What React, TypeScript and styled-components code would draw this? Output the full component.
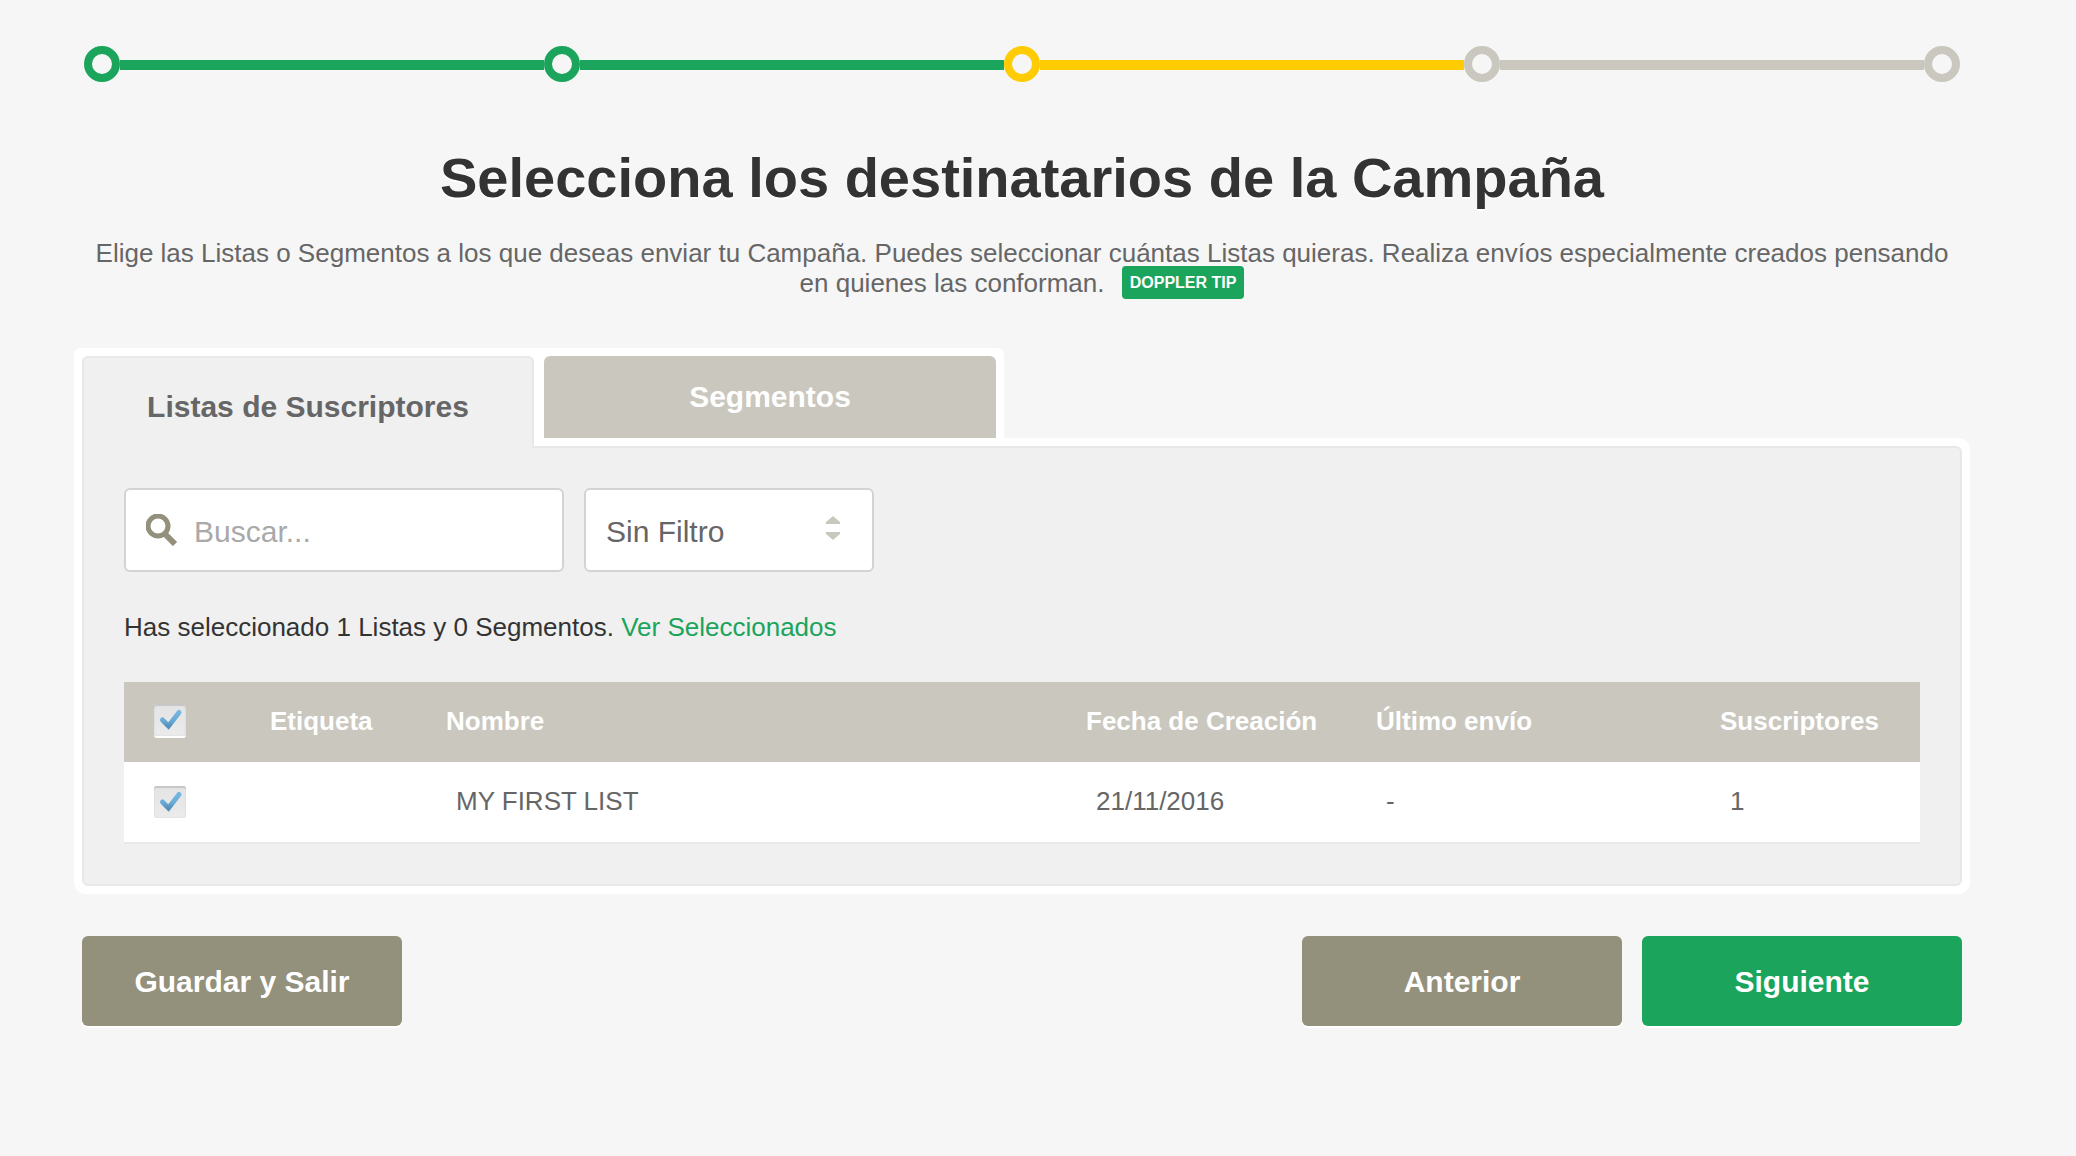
import React, { useState } from "react";
import styled, { createGlobalStyle, css } from "styled-components";

const color = {
  page: "#f6f6f6",
  panel: "#f0f0f0",
  line: "#e8e8e8",
  field: "#d3d3d3",
  green: "#1ba45b",
  yellow: "#ffcb03",
  sand: "#cac7be",
  olive: "#93907c",
  text: "#666666",
  dark: "#333333",
};

const GlobalStyle = createGlobalStyle`
  *, *::before, *::after { box-sizing: border-box; }
  body {
    margin: 0;
    background: ${color.page};
    color: ${color.text};
    font-family: "Liberation Sans", Arial, Helvetica, sans-serif;
    font-size: 26px;
    line-height: 30px;
  }
  button, input, select { font: inherit; }
`;

const Page = styled.main`
  padding: 46px 114px 60px 82px;
`;

const Steps = styled.ol`
  display: flex;
  align-items: center;
  list-style: none;
  margin: 0;
  padding: 0 2px;
`;

/* The last step has no bar, so the other steps share the width evenly. */
const Step = styled.li<{ $tone: string; $grow: boolean }>`
  display: flex;
  align-items: center;
  flex: ${(p) => (p.$grow ? "1 1 0" : "none")};
  color: ${(p) => p.$tone};

  &::before {
    content: "";
    flex: none;
    width: 36px;
    height: 36px;
    border: 8px solid currentColor;
    border-radius: 50%;
  }

  &::after {
    content: "";
    display: ${(p) => (p.$grow ? "block" : "none")};
    flex: 1;
    height: 10px;
    margin-top: 2px;
    background: currentColor;
  }
`;

const Title = styled.h1`
  margin: 64px 0 28px;
  color: ${color.dark};
  font-size: 56px;
  line-height: 64px;
  text-align: center;
  text-shadow: 0 2px 0 #fff;
`;

const Intro = styled.p`
  margin: 0 0 50px;
  text-align: center;
`;

const Tip = styled.a`
  margin-left: 10px;
  padding: 8px;
  border-radius: 4px;
  background: ${color.green};
  color: #fff;
  font-size: 16px;
  font-weight: bold;
  line-height: 20px;
  text-decoration: none;
  vertical-align: 4px;
`;

const Block = styled.section`
  margin: 0 -8px;
`;

const Tabs = styled.div`
  display: flex;
  align-items: flex-start;
  gap: 10px;
  width: fit-content;
  padding: 8px 8px 0;
  border-radius: 6px 6px 0 0;
  background: #fff;
`;

const Tab = styled.button<{ $active: boolean }>`
  width: 452px;
  border: 0;
  border-radius: 6px 6px 0 0;
  font-size: 30px;
  font-weight: bold;
  line-height: 34px;
  cursor: pointer;

  ${(p) =>
    p.$active
      ? css`
          position: relative;
          margin-bottom: -10px;
          padding: 32px 20px 24px;
          border: 2px solid ${color.line};
          border-bottom: 0;
          background: ${color.panel};
          color: ${color.text};
        `
      : css`
          padding: 24px 20px;
          background: ${color.sand};
          color: #fff;
        `}
`;

const PanelFrame = styled.div`
  padding: 8px;
  border-radius: 0 12px 12px 12px;
  background: #fff;
`;

const Panel = styled.div`
  padding: 40px;
  border: 2px solid ${color.line};
  border-radius: 0 6px 6px 6px;
  background: ${color.panel};
`;

const Filters = styled.div`
  display: flex;
  gap: 20px;
`;

const fieldBox = css`
  height: 84px;
  border: 2px solid ${color.field};
  border-radius: 6px;
  background: #fff;
`;

const SearchBox = styled.label`
  ${fieldBox}
  display: flex;
  align-items: center;
  gap: 16px;
  width: 440px;
  padding: 0 20px;
`;

const SearchInput = styled.input`
  flex: 1;
  min-width: 0;
  padding: 4px 0 0;
  border: 0;
  outline: 0;
  background: none;
  color: ${color.text};
  font-size: 30px;
  line-height: 34px;

  &::placeholder {
    color: #a9a9a9;
    opacity: 1;
  }
`;

const SelectBox = styled.label`
  position: relative;
  width: 290px;

  svg {
    position: absolute;
    top: 28px;
    right: 34px;
    pointer-events: none;
  }
`;

const Select = styled.select`
  ${fieldBox}
  appearance: none;
  width: 100%;
  padding: 4px 60px 0 20px;
  color: ${color.text};
  font-size: 30px;
`;

const Summary = styled.p`
  margin: 40px 0;
  color: ${color.dark};
`;

const SummaryLink = styled.a`
  color: ${color.green};
  text-decoration: none;
`;

const Table = styled.table`
  width: 100%;
  table-layout: fixed;
  border-collapse: separate;
  border-spacing: 0;
  text-align: left;
`;

const Col = styled.col<{ $width?: number }>`
  width: ${(p) => (p.$width ? `${p.$width}px` : "auto")};
`;

const HeadCell = styled.th`
  height: 80px;
  padding: 24px 0 26px 20px;
  background: ${color.sand};
  color: #fff;
  white-space: nowrap;
`;

const Cell = styled.td`
  height: 82px;
  padding: 24px 0 26px 30px;
  border-bottom: 2px solid ${color.line};
  background: #fff;
`;

const CheckHead = styled(HeadCell)`
  padding: 0 0 4px 30px;
`;

const CheckCell = styled(Cell)`
  padding: 0 0 0 30px;
`;

const CheckLabel = styled.label`
  display: grid;
  width: 32px;
  height: 32px;

  > * {
    grid-area: 1 / 1;
  }

  svg {
    pointer-events: none;
  }
`;

const CheckInput = styled.input`
  appearance: none;
  width: 32px;
  height: 32px;
  margin: 0;
  border-radius: 3px;
  background: linear-gradient(#e4e4e4, #ebebeb);
  box-shadow: inset 0 2px 1px #c6c6c6, inset 0 0 2px #d6d6d6, 0 2px 0 #fff;

  &:not(:checked) + svg {
    display: none;
  }
`;

const Actions = styled.div`
  display: flex;
  gap: 20px;
  margin-top: 42px;
`;

const Action = styled.button<{ $primary?: boolean; $first?: boolean }>`
  width: 320px;
  height: 90px;
  margin-right: ${(p) => (p.$first ? "auto" : "0")};
  padding: 2px 0 0;
  border: 0;
  border-radius: 6px;
  background: ${(p) => (p.$primary ? color.green : color.olive)};
  box-shadow: 0 2px 0 #fff;
  color: #fff;
  font-size: 30px;
  font-weight: bold;
  line-height: 34px;
  cursor: pointer;
`;

const steps = [color.green, color.green, color.yellow, color.sand, color.sand];

const rows = [{ name: "MY FIRST LIST", created: "21/11/2016", sent: "-", subscribers: 1 }];

function SearchIcon() {
  return (
    <svg width="32" height="32" viewBox="0 0 32 32" fill="none" aria-hidden="true">
      <circle cx="12" cy="12" r="10" stroke={color.olive} strokeWidth="5" />
      <path d="M18 19L29 30" stroke={color.olive} strokeWidth="6" />
    </svg>
  );
}

function SortArrows() {
  return (
    <svg width="14" height="24" viewBox="0 0 14 24" fill={color.sand} aria-hidden="true">
      <path d="M7 0L14 6V8H0V6Z" />
      <path d="M0 16H14V18L7 24L0 18Z" />
    </svg>
  );
}

function Check({ label, id }: { label: string; id: string }) {
  const [on, setOn] = useState(true);
  return (
    <CheckLabel htmlFor={id}>
      <CheckInput
        id={id}
        type="checkbox"
        aria-label={label}
        checked={on}
        onChange={(e) => setOn(e.target.checked)}
      />
      <svg width="32" height="32" viewBox="0 0 32 32" aria-hidden="true">
        <defs>
          <linearGradient id={`${id}-fill`} x1="0" y1="0" x2="0" y2="1">
            <stop offset="0" stopColor="#74b6df" />
            <stop offset="0.6" stopColor="#6aabd6" />
            <stop offset="1" stopColor="#5590bb" />
          </linearGradient>
        </defs>
        <path
          d="M8.500 16L14.500 22L25 8.500"
          fill="none"
          stroke={`url(#${id}-fill)`}
          strokeWidth="5"
          strokeLinecap="round"
        />
      </svg>
    </CheckLabel>
  );
}

export default function App() {
  const [tab, setTab] = useState("listas");
  return (
    <Page>
      <GlobalStyle />
      <Steps>
        {steps.map((tone, i) => (
          <Step key={i} $tone={tone} $grow={i < steps.length - 1} />
        ))}
      </Steps>

      <Title>Selecciona los destinatarios de la Campaña</Title>
      <Intro>
        Elige las Listas o Segmentos a los que deseas enviar tu Campaña. Puedes seleccionar cuántas
        Listas quieras. Realiza envíos especialmente creados pensando en quienes las conforman.{" "}
        <Tip href="#tip">DOPPLER TIP</Tip>
      </Intro>

      <Block>
        <Tabs role="tablist">
          <Tab role="tab" aria-selected={tab === "listas"} $active={tab === "listas"} onClick={() => setTab("listas")}>
            Listas de Suscriptores
          </Tab>
          <Tab role="tab" aria-selected={tab === "segmentos"} $active={tab === "segmentos"} onClick={() => setTab("segmentos")}>
            Segmentos
          </Tab>
        </Tabs>
        <PanelFrame>
          <Panel>
            <Filters>
              <SearchBox htmlFor="search">
                <SearchIcon />
                <SearchInput id="search" type="text" placeholder="Buscar..." aria-label="Buscar" />
              </SearchBox>
              <SelectBox htmlFor="filter">
                <Select id="filter" aria-label="Filtro">
                  <option>Sin Filtro</option>
                </Select>
                <SortArrows />
              </SelectBox>
            </Filters>

            <Summary>
              Has seleccionado 1 Listas y 0 Segmentos.{" "}
              <SummaryLink href="#seleccionados">Ver Seleccionados</SummaryLink>
            </Summary>

            <Table>
              <colgroup>
                <Col $width={126} />
                <Col $width={176} />
                <Col />
                <Col $width={290} />
                <Col $width={344} />
                <Col $width={220} />
              </colgroup>
              <thead>
                <tr>
                  <CheckHead>
                    <Check id="check-all" label="Seleccionar todas" />
                  </CheckHead>
                  <HeadCell>Etiqueta</HeadCell>
                  <HeadCell>Nombre</HeadCell>
                  <HeadCell>Fecha de Creación</HeadCell>
                  <HeadCell>Último envío</HeadCell>
                  <HeadCell>Suscriptores</HeadCell>
                </tr>
              </thead>
              <tbody>
                {rows.map((row, i) => (
                  <tr key={row.name}>
                    <CheckCell>
                      <Check id={`check-${i}`} label={row.name} />
                    </CheckCell>
                    <Cell />
                    <Cell>{row.name}</Cell>
                    <Cell>{row.created}</Cell>
                    <Cell>{row.sent}</Cell>
                    <Cell>{row.subscribers}</Cell>
                  </tr>
                ))}
              </tbody>
            </Table>
          </Panel>
        </PanelFrame>
      </Block>

      <Actions>
        <Action $first>Guardar y Salir</Action>
        <Action>Anterior</Action>
        <Action $primary>Siguiente</Action>
      </Actions>
    </Page>
  );
}
